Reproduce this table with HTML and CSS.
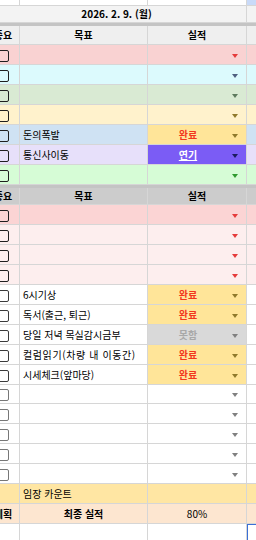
FILE: index.html
```html
<!DOCTYPE html>
<html lang="ko">
<head>
<meta charset="utf-8">
<link rel="stylesheet" href="styles.css">
</head>
<body>
<div class="sheet">
  <div class="row r-top"><div class="c"></div><div class="c"></div><div class="c"></div><div class="c sel-top"></div></div>
  <div class="row r-date"><div class="c span3 bold">2026. 2. 9. (월)</div><div class="c"></div></div>
  <div class="sep"></div>
  <div class="row r-head h1"><div class="c ctr bold">중요</div><div class="c ctr bold">목표</div><div class="c ctr bold">실적</div><div class="c"></div></div>

  <div class="row bg-pink"><div class="c ctr"><span class="cb"></span></div><div class="c txt"></div><div class="c dd"><span class="v"></span><span class="ar a-red"></span></div><div class="c"></div></div>
  <div class="row bg-cyan"><div class="c ctr"><span class="cb"></span></div><div class="c txt"></div><div class="c dd"><span class="v"></span><span class="ar a-blue"></span></div><div class="c"></div></div>
  <div class="row bg-green"><div class="c ctr"><span class="cb"></span></div><div class="c txt"></div><div class="c dd"><span class="v"></span><span class="ar a-sage"></span></div><div class="c"></div></div>
  <div class="row bg-yellow"><div class="c ctr"><span class="cb"></span></div><div class="c txt"></div><div class="c dd"><span class="v"></span><span class="ar a-olive"></span></div><div class="c"></div></div>
  <div class="row bg-blue"><div class="c ctr"><span class="cb"></span></div><div class="c txt">돈의폭발</div><div class="c dd chip-done"><span class="v">완료</span><span class="ar a-olive"></span></div><div class="c"></div></div>
  <div class="row bg-lav"><div class="c ctr"><span class="cb"></span></div><div class="c txt">통신사이동</div><div class="c dd chip-delay"><span class="v">연기</span><span class="ar a-navy"></span></div><div class="c"></div></div>
  <div class="row bg-mint"><div class="c ctr"><span class="cb"></span></div><div class="c txt"></div><div class="c dd"><span class="v"></span><span class="ar a-green"></span></div><div class="c"></div></div>

  <div class="sep"></div>
  <div class="row r-head h2"><div class="c ctr bold">중요</div><div class="c ctr bold">목표</div><div class="c ctr bold">실적</div><div class="c"></div></div>

  <div class="row bg-rose"><div class="c ctr"><span class="cb"></span></div><div class="c txt"></div><div class="c dd"><span class="v"></span><span class="ar a-red"></span></div><div class="c"></div></div>
  <div class="row bg-blush"><div class="c ctr"><span class="cb"></span></div><div class="c txt"></div><div class="c dd"><span class="v"></span><span class="ar a-red"></span></div><div class="c"></div></div>
  <div class="row bg-blush"><div class="c ctr"><span class="cb"></span></div><div class="c txt"></div><div class="c dd"><span class="v"></span><span class="ar a-red"></span></div><div class="c"></div></div>
  <div class="row bg-blush"><div class="c ctr"><span class="cb"></span></div><div class="c txt"></div><div class="c dd"><span class="v"></span><span class="ar a-red"></span></div><div class="c"></div></div>

  <div class="row"><div class="c ctr"><span class="cb mid"></span></div><div class="c txt">6시기상</div><div class="c dd chip-done"><span class="v">완료</span><span class="ar a-olive"></span></div><div class="c"></div></div>
  <div class="row"><div class="c ctr"><span class="cb mid"></span></div><div class="c txt">독서(출근, 퇴근)</div><div class="c dd chip-done"><span class="v">완료</span><span class="ar a-olive"></span></div><div class="c"></div></div>
  <div class="row"><div class="c ctr"><span class="cb mid"></span></div><div class="c txt">당일 저녁 목실감시금부</div><div class="c dd chip-miss"><span class="v">못함</span><span class="ar a-gray"></span></div><div class="c"></div></div>
  <div class="row"><div class="c ctr"><span class="cb mid"></span></div><div class="c txt wide">컬럼읽기(차량 내 이동간)</div><div class="c dd chip-done"><span class="v">완료</span><span class="ar a-olive"></span></div><div class="c"></div></div>
  <div class="row"><div class="c ctr"><span class="cb mid"></span></div><div class="c txt">시세체크(앞마당)</div><div class="c dd chip-done"><span class="v">완료</span><span class="ar a-olive"></span></div><div class="c"></div></div>

  <div class="row short"><div class="c ctr"><span class="cb light"></span></div><div class="c txt"></div><div class="c dd"><span class="v"></span><span class="ar a-gray"></span></div><div class="c"></div></div>
  <div class="row"><div class="c ctr"><span class="cb light"></span></div><div class="c txt"></div><div class="c dd"><span class="v"></span><span class="ar a-gray"></span></div><div class="c"></div></div>
  <div class="row"><div class="c ctr"><span class="cb light"></span></div><div class="c txt"></div><div class="c dd"><span class="v"></span><span class="ar a-gray"></span></div><div class="c"></div></div>
  <div class="row"><div class="c ctr"><span class="cb light"></span></div><div class="c txt"></div><div class="c dd"><span class="v"></span><span class="ar a-gray"></span></div><div class="c"></div></div>
  <div class="row"><div class="c ctr"><span class="cb light"></span></div><div class="c txt"></div><div class="c dd"><span class="v"></span><span class="ar a-gray"></span></div><div class="c"></div></div>

  <div class="row bg-gold"><div class="c"></div><div class="c txt">임장 카운트</div><div class="c"></div><div class="c"></div></div>
  <div class="row bg-peach"><div class="c ctr bold">계획</div><div class="c ctr bold">최종 실적</div><div class="c ctr">80%</div><div class="c"></div></div>
  <div class="row"><div class="c"></div><div class="c"></div><div class="c"></div><div class="c sel"></div></div>
</div>
</body>
</html>
```

FILE: styles.css
```css
html, body {
  margin: 0;
  padding: 0;
  background: #ffffff;
  overflow: hidden;
}
body {
  width: 256px;
  height: 540px;
  font-family: "Noto Sans CJK KR", "Liberation Sans", sans-serif;
  font-size: 10px;
  color: #000;
}
.sheet {
  margin-left: -13px;
  width: 300px;
}
.row {
  display: grid;
  grid-template-columns: 33px 128px 99px 40px;
  height: 20px;
}
.row.short { height: 19px; }
.c {
  box-sizing: border-box;
  border-right: 1px solid #d6d6d6;
  border-bottom: 1px solid #d6d6d6;
  display: flex;
  align-items: center;
  min-width: 0;
  overflow: hidden;
  white-space: nowrap;
  line-height: 1;
}
.ctr { justify-content: center; }
.bold { font-weight: 700; }
.txt { padding-left: 3px; }
.txt.wide { letter-spacing: 0.6px; }
.span3 { grid-column: span 3; justify-content: center; }

.r-top { height: 6px; }
.sel-top { background: #c9daf8; }
.r-date { height: 17px; background: #f3f3f3; }
.sep { height: 3px; background: #c4c4c4; }
.r-head.h1 { height: 19px; background: #efefef; }
.r-head.h2 { height: 17px; background: #cccccc; }

.cb {
  box-sizing: border-box;
  width: 12px;
  height: 12px;
  margin-top: 2px;
  border: 1.5px solid #1f1f1f;
  border-radius: 2px;
}
.cb.mid { border-color: #3a3a3a; }
.cb.light { border-color: #777; }

.dd {
  display: grid;
  grid-template-columns: 1fr 18px;
  align-items: center;
}
.v {
  text-align: center;
  font-weight: 700;
}
.ar {
  width: 0;
  height: 0;
  margin-left: 4px;
  margin-top: 2px;
  border-left: 3.5px solid transparent;
  border-right: 3.5px solid transparent;
  border-top: 4px solid #888;
}
.a-red { border-top-color: #e53b3b; }
.a-blue { border-top-color: #4f5f80; }
.a-sage { border-top-color: #5e7a5e; }
.a-olive { border-top-color: #8f7a2c; }
.a-navy { border-top-color: #1b1b60; }
.a-green { border-top-color: #2f9a2f; }
.a-gray { border-top-color: #808080; }

.chip-done { background: #ffe599; }
.chip-done .v { color: #f2361c; }
.chip-delay { background: #7b5cf5; }
.chip-delay .v { color: #ffffff; text-decoration: underline; }
.chip-miss { background: #d9d9d9; }
.chip-miss .v { color: #a8a8a8; }

.bg-pink { background: #f9d2d2; }
.bg-cyan { background: #dcfafd; }
.bg-green { background: #d9ead3; }
.bg-yellow { background: #fff2cc; }
.bg-blue { background: #cfe2f3; }
.bg-lav { background: #e7e0fa; }
.bg-mint { background: #d6fcd6; }
.bg-rose { background: #fbd4d4; }
.bg-blush { background: #fdeeee; }
.bg-gold { background: #ffe6a3; }
.bg-peach { background: #fde6d0; }

.sel {
  border-left: 1.5px solid #3b6fd6;
  border-top: 1.5px solid #3b6fd6;
}
```
